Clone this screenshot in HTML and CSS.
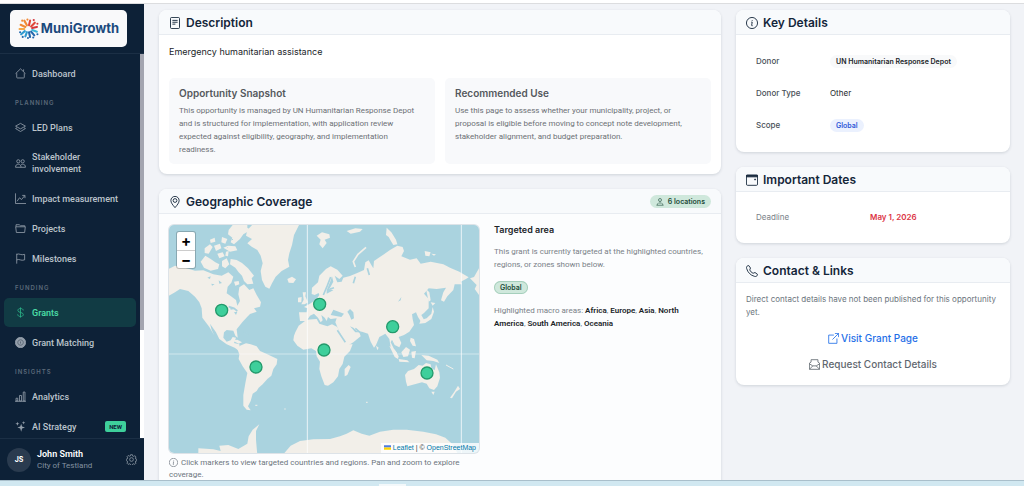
FILE: index.html
```html
<!DOCTYPE html>
<html lang="en">
<head>
<meta charset="utf-8">
<meta name="viewport" content="width=device-width, initial-scale=1">
<title>MuniGrowth – Grant</title>
<link rel="stylesheet" href="styles.css">
</head>
<body>
<svg class="defs" aria-hidden="true">
  <symbol id="i-house" viewBox="0 0 16 16"><path d="M2.5 7.5v6a1 1 0 0 0 1 1h9a1 1 0 0 0 1-1v-6M.8 8.2 8 1.2l7.2 7M12.5 5V2"/></symbol>
  <symbol id="i-layers" viewBox="0 0 16 16"><path d="M8 2 .8 6 8 10l7.2-4zM3 8.2.8 9.5 8 13.8l7.2-4.3L13 8.2"/></symbol>
  <symbol id="i-people" viewBox="0 0 16 16"><circle cx="4.8" cy="4.8" r="2.3"/><circle cx="11.2" cy="4.8" r="2.3"/><path d="M.8 13.5c0-3 1.500-4.500 4-4.500s4 1.500 4 4.500zM8.800 13.500h6.400c0-3-1.500-4.500-4-4.500-1 0-1.800.2-2.500.700"/></symbol>
  <symbol id="i-graph" viewBox="0 0 16 16"><path d="M.7.5v14.800H16M3 12l3.500-5 3 2.500L14 4M10.500 3.500h4v4"/></symbol>
  <symbol id="i-folder" viewBox="0 0 16 16"><path d="M1 5.500h14l-1 8.300H2zM1.500 5.500V2.500h4.700l1.600 1.500h6.500v1.500"/></symbol>
  <symbol id="i-flag" viewBox="0 0 16 16"><path d="M2.500 15.500V1M2.500 2c4-2 6 2 11.500 0v8c-5.500 2-7.500-2-11.500 0"/></symbol>
  <symbol id="i-dollar" viewBox="0 0 16 16"><path d="M8 .5v15M12 5c0-1.800-1.700-2.800-4-2.800S4.200 3.400 4.200 5c0 4 7.900 2 7.900 6 0 1.700-1.700 2.800-4.100 2.800S3.900 12.600 3.900 10.700"/></symbol>
  <symbol id="i-target" viewBox="0 0 16 16"><circle cx="8" cy="8" r="7.500" fill="currentColor"/><path d="M8 4a4 4 0 1 0 .1 0M8 6.500v3" stroke="#53606e"/></symbol>
  <symbol id="i-bars" viewBox="0 0 16 16"><path d="M1.500 10.500h2.500v4H1.500zM6.500 6.500h3v8h-3zM12 1.500h2.500v13H12zM0 15h16"/></symbol>
  <symbol id="i-stars" viewBox="0 0 16 16"><path fill="currentColor" stroke="none" d="M9 4l1.300 4L14.500 9.600 10.300 11 9 15.800 7.600 11 3.500 9.600 7.600 8zM3.500 1l.8 2.200L6.500 4l-2.200.8L3.500 7l-.8-2.200L.5 4l2.200-.8zM12.500 0l.6 1.900 1.900.6-1.900.6-.6 1.900-.6-1.900-1.900-.6 1.900-.6z"/></symbol>
  <symbol id="i-gear" viewBox="0 0 16 16"><circle cx="8" cy="8" r="2.700"/><path d="M6.700 1h2.600l.5 2 1.300.5 1.800-1 1.700 1.700-1 1.800.5 1.300 1.900.5v2l-1.900.5-.6 1.400 1 1.700-1.700 1.700-1.800-1-1.200.5-.5 2H6.700l-.5-2-1.300-.5-1.800 1-1.700-1.700 1-1.800-.5-1.300L.3 9.500v-2L2 7l.5-1.400-1-1.700 1.700-1.700 1.800 1L6.200 3z"/></symbol>
  <symbol id="i-file" viewBox="0 0 16 16"><rect x="2" y=".6" width="12" height="14.800" rx="1.500"/><path d="M4.500 4.500h7M4.500 7h7M4.500 9.500h4"/></symbol>
  <symbol id="i-pin" viewBox="0 0 16 16"><path d="M8 15.500C5 12 2.500 9 2.500 6a5.500 5.500 0 0 1 11 0c0 3-2.500 6-5.500 9.500z"/><circle cx="8" cy="6" r="2.500"/></symbol>
  <symbol id="i-info" viewBox="0 0 16 16"><circle cx="8" cy="8" r="7.400"/><path d="M7 6.800h1.300L7.500 11c0 .8.500 1 1.300.6M8.300 4v1"/></symbol>
  <symbol id="i-cal" viewBox="0 0 16 16"><rect x=".6" y="1.600" width="14.800" height="13.500" rx="1.500"/><path fill="currentColor" d="M.6 1.600h14.800v2.200H.6z"/><path d="M11.500 6.800h1.200v1h-1.200z"/></symbol>
  <symbol id="i-phone" viewBox="0 0 16 16"><path d="M1.500 1.500 3.600.7 6 4 5 6.500c.8 2 2.500 3.700 4.500 4.500l2.500-1 3.300 2.400-.8 2.100c-.5 1-2 1-3 .7C6 13.700 2.300 10 .8 4.500c-.3-1-.2-2.500.7-3z"/></symbol>
  <symbol id="i-ext" viewBox="0 0 16 16"><path d="M8.500 3H1v12h12V8M10 .6h5.400V6M15.400.6 6.500 9.500"/></symbol>
  <symbol id="i-mail" viewBox="0 0 16 16"><path d="M.6 6 3 4.500V1h10v3.500L15.400 6v9H.6zM.6 7l4.900 3h5l4.900-3M.6 15l4.900-5M15.400 15l-4.900-5"/></symbol>
  <symbol id="i-geo" viewBox="0 0 16 16"><circle cx="8" cy="4" r="3"/><path d="M8 7v5M5 9.500 1.500 14.500h13L11 9.500"/></symbol>
</svg>

<div class="topline"></div>
<div class="app">
  <aside class="sidebar">
    <div class="brand">
      <a class="logo" href="#">
        <svg class="logo-mark" viewBox="0 0 40 40" aria-hidden="true">
          <g fill="none" stroke-width="4" stroke-linecap="round">
            <path stroke="#e0483a" d="M21 14 23 5M25 16l7-7"/><path stroke="#d5363c" d="M27 19l9-2"/>
            <path stroke="#f08a35" d="M17 14 12 5M14 17 5 13"/><path stroke="#f4a84a" d="M12 21H3"/>
            <path stroke="#2e9bd0" d="M13 25l-7 6M17 27l-3 8"/><path stroke="#2468ad" d="M21 27l2 9M25 26l6 7"/><path stroke="#39b5d8" d="M27 23l9 3"/>
          </g>
          <g fill="#f08a35"><circle cx="8" cy="5" r="2"/><circle cx="18" cy="3" r="2"/></g><circle cx="30" cy="4" r="2" fill="#d5363c"/><circle cx="37" cy="11" r="2" fill="#d5363c"/>
          <g fill="#2468ad"><circle cx="4" cy="27" r="2"/><circle cx="9" cy="36" r="2"/><circle cx="19" cy="38" r="2"/><circle cx="29" cy="37" r="2"/><circle cx="37" cy="31" r="2"/></g>
        </svg>
        <span class="logo-text">MuniGrowth</span>
      </a>
    </div>
    <nav class="nav">
      <a class="item" href="#"><svg class="ico"><use href="#i-house"/></svg>Dashboard</a>
      <div class="group">Planning</div>
      <a class="item" href="#"><svg class="ico"><use href="#i-layers"/></svg>LED Plans</a>
      <a class="item" href="#"><svg class="ico"><use href="#i-people"/></svg><span class="two-line">Stakeholder involvement</span></a>
      <a class="item" href="#"><svg class="ico"><use href="#i-graph"/></svg>Impact measurement</a>
      <a class="item" href="#"><svg class="ico"><use href="#i-folder"/></svg>Projects</a>
      <a class="item" href="#"><svg class="ico"><use href="#i-flag"/></svg>Milestones</a>
      <div class="group">Funding</div>
      <a class="item active" href="#"><svg class="ico"><use href="#i-dollar"/></svg>Grants</a>
      <a class="item" href="#"><svg class="ico"><use href="#i-target"/></svg>Grant Matching</a>
      <div class="group">Insights</div>
      <a class="item" href="#"><svg class="ico"><use href="#i-bars"/></svg>Analytics</a>
      <a class="item" href="#"><svg class="ico"><use href="#i-stars"/></svg>AI Strategy<span class="new">NEW</span></a>
      <div class="scroll"></div>
    </nav>
    <div class="user">
      <span class="avatar">JS</span>
      <div class="who"><strong>John Smith</strong><span>City of Testland</span></div>
      <button class="gear" type="button" aria-label="Settings"><svg class="ico"><use href="#i-gear"/></svg></button>
    </div>
  </aside>

  <main class="main">
    <div class="col">
      <section class="card">
        <header class="head"><svg class="ico"><use href="#i-file"/></svg><h2>Description</h2></header>
        <div class="body">
          <p class="lead">Emergency humanitarian assistance</p>
          <div class="tiles">
            <div class="tile"><h3>Opportunity Snapshot</h3><p>This opportunity is managed by UN Humanitarian Response Depot and is structured for implementation, with application review expected against eligibility, geography, and implementation readiness.</p></div>
            <div class="tile"><h3>Recommended Use</h3><p>Use this page to assess whether your municipality, project, or proposal is eligible before moving to concept note development, stakeholder alignment, and budget preparation.</p></div>
          </div>
        </div>
      </section>

      <section class="card geo">
        <header class="head"><svg class="ico"><use href="#i-pin"/></svg><h2>Geographic Coverage</h2><span class="pill count"><svg class="ico"><use href="#i-geo"/></svg>6 locations</span></header>
        <div class="body geo-grid">
          <div class="map-col">
            <div class="map">
              <svg class="world" viewBox="27 30 930 684" preserveAspectRatio="xMidYMid slice" role="img" aria-label="World map">
                <filter id="coast" x="0" y="0" width="1" height="1"><feTurbulence type="fractalNoise" baseFrequency=".2" numOctaves="2" seed="4"/><feDisplacementMap in="SourceGraphic" scale="4"/></filter>
                <rect x="27" y="30" width="930" height="684" fill="#aad3df"/>
                <g filter="url(#coast)">
                <g fill="#f2efe9">
                  <path d="M20 165 45 152 75 158 105 167 130 166 160 178 185 182 205 172 220 185 214 203 203 215 200 235 215 245 228 255 232 272 240 258 235 238 238 217 252 208 268 225 280 220 290 240 303 262 300 275 282 280 290 290 270 297 262 305 248 320 236 335 230 343 233 368 226 362 220 347 200 345 192 352 190 368 200 380 212 376 218 366 228 368 222 384 238 388 240 401 250 404 238 408 224 398 200 388 178 372 168 352 150 326 155 345 162 360 148 336 127 308 125 280 118 262 105 245 85 228 60 222 45 232 20 246z"/>
                  <path d="M262 45 282 24H420L402 60 396 90 388 115 384 135 388 155 365 168 347 185 336 205 328 221 316 215 306 195 302 168 308 145 302 122 292 105 275 95 262 85 276 72 258 62z"/>
                  <path d="M206 45 222 25H262L262 38 272 45 250 58 240 72 222 88 212 82 217 68 204 58zM212 132 230 135 246 144 264 160 282 182 275 190 280 206 262 208 252 198 246 182 236 172 226 158 210 148zM122 140 136 122 152 132 166 142 178 148 174 162 152 167 132 158zM134 100 150 88 158 96 146 116 134 114zM162 92 180 86 184 100 168 108zM186 66 202 72 196 86 184 82zM172 116 188 112 194 124 178 130zM186 138 200 130 208 148 196 160 186 154zM190 98 204 92 226 94 232 106 210 110zM150 74 164 68 166 80 152 84zM222 200 236 198 238 208 226 212zM198 110 206 108 204 124 196 122z"/>
                  <path d="M382 192 396 185 408 193 400 204 386 203zM428 232 438 232 436 244 444 262 434 268 424 268 431 254zM414 248 425 246 424 262 414 262z"/>
                  <path d="M470 62 486 52 508 58 510 68 494 74 500 84 488 100 478 88 482 74z"/>
                  <path d="M455 237 456 218 474 202 478 182 498 162 512 154 532 164 548 182 538 192 524 182 532 202 545 200 550 188 570 183 590 175 612 165 616 142 626 136 634 150 640 160 642 138 654 130 672 118 690 105 712 92 728 96 732 108 724 124 750 134 770 130 782 146 812 140 850 148 870 158 898 170 926 187 918 192 902 200 906 208 884 208 880 225 862 244 852 260 843 256 850 232 858 218 830 222 806 220 792 236 806 252 806 280 792 294 784 300 792 314 784 322 774 306 768 292 756 298 758 312 762 330 748 350 732 360 716 366 724 384 718 397 704 390 696 374 692 382 702 402 712 415 706 416 692 396 688 372 676 356 658 366 648 390 642 398 632 380 624 356 606 350 590 348 580 338 570 334 586 352 598 352 602 364 580 382 560 394 556 388 544 362 532 336 526 322 530 310 512 312 504 306 500 318 494 308 484 300 488 316 482 322 474 308 462 296 450 302 440 318 420 318 417 292 440 292 442 280 432 276 452 265 470 252 478 240 476 234 464 240z"/>
                  <path d="M406 352 416 332 440 314 470 312 478 326 502 334 516 328 532 336 546 364 560 388 578 388 570 408 553 425 548 447 538 462 534 484 520 502 504 512 494 510 484 484 478 462 480 440 470 424 468 408 454 400 430 404 412 392 400 376 402 362z"/>
                  <path d="M554 462 566 450 572 456 562 480 554 484zM232 402 240 392 258 385 272 388 290 394 300 408 322 418 352 432 350 448 340 462 334 482 322 492 308 508 296 518 290 528 278 536 272 558 264 574 272 586 260 584 250 572 250 540 256 505 262 474 248 454 236 432 238 418zM216 376 232 374 246 382 236 386z"/>
                  <path d="M735 480 744 468 762 462 776 450 788 452 798 444 812 448 814 460 824 466 828 448 838 472 840 488 832 514 822 525 808 520 800 506 786 502 764 508 742 514 738 500zM814 530 824 530 820 540zM894 512 900 522 888 530 876 550 870 548 882 532zM688 392 704 404 716 424 714 432 704 426zM716 432 742 436 748 442 718 440zM724 412 738 396 750 404 744 424 730 426zM754 410 768 408 764 430 756 428zM784 420 806 422 832 434 838 444 820 438 800 436zM752 368 762 372 768 394 758 392 750 378zM648 392 656 398 652 406zM812 262 826 264 818 272zM818 276 814 296 800 310 782 316 778 326 796 324 814 312 822 290zM798 222 808 232 812 256 806 260zM930 190 942 186 957 160V240L944 222 950 210z"/>
                  <path d="M680 38 694 52 708 74 712 88 700 90 694 80 686 66 678 60zM560 48 586 40 608 42 600 50 572 56zM794 108 812 112 808 124 796 122zM814 116 828 118 822 122z"/>
                  <path d="M115 700 160 703 182 708 178 692 205 690 235 702 262 686 266 664 278 644 298 628 288 648 288 675 292 720H115zM368 720 392 692 420 678 460 673 510 672 540 664 560 656 580 646 605 656 628 662 660 650 700 644 740 644 790 650 828 658 856 668 880 690 895 720z"/>
                </g>
                <path d="M618 97 594 118 580 140 586 156" fill="none" stroke="#f2efe9" stroke-width="5"/>
                <path d="M512 186 502 212 490 240M510 222 522 218M532 346 556 382M586 340 600 352M250 350 272 364M206 275 222 280 232 288M586 185 580 205M622 160 628 180" fill="none" stroke="#aad3df" stroke-width="5"/>
                <path d="M500 226 510 202 516 184 520 200 508 222 520 226 500 236zM512 300 520 284 536 290 552 296 544 306zM562 290 570 282 580 292 582 310 574 314 568 300zM210 276 224 282 212 284zM222 292 232 290 228 300zM142 188 152 184 150 192zM154 206 164 208 156 212zM714 260 724 246 722 256zM176 196 186 204 178 206z" fill="#aad3df"/>
                <path d="M286 571h6M373 582h4M618 562h5M858 450 880 462" stroke="#f2efe9" stroke-width="3"/>
                </g>
                <path d="M442 30v684M904 30v684" fill="none" stroke="#fff" stroke-opacity=".75" stroke-width="3"/>
                <path d="M27 417h930" fill="none" stroke="#fff" stroke-opacity=".45" stroke-width="3"/>
                <g fill="#3ecf9b" stroke="#249a6c" stroke-width="4"><circle cx="185" cy="286" r="18"/><circle cx="479" cy="268" r="18"/><circle cx="698" cy="335" r="18"/><circle cx="492" cy="405" r="18"/><circle cx="288" cy="456" r="18"/><circle cx="801" cy="474" r="18"/></g>
              </svg>
              <div class="zoom"><button type="button" aria-label="Zoom in">+</button><button type="button" aria-label="Zoom out">−</button></div>
              <div class="credit"><svg class="ua" viewBox="0 0 12 8"><path fill="#4c7be1" d="M0 0h12v4H0z"/><path fill="#ffd500" d="M0 4h12v4H0z"/></svg><a href="#">Leaflet</a> | © <a href="#">OpenStreetMap</a></div>
            </div>
            <p class="hint"><svg class="ico"><use href="#i-info"/></svg>Click markers to view targeted countries and regions. Pan and zoom to explore coverage.</p>
          </div>
          <div class="area">
            <h3>Targeted area</h3>
            <p>This grant is currently targeted at the highlighted countries, regions, or zones shown below.</p>
            <span class="pill zone">Global</span>
            <p>Highlighted macro areas: <b>Africa</b>, <b>Europe</b>, <b>Asia</b>, <b>North America</b>, <b>South America</b>, <b>Oceania</b></p>
          </div>
        </div>
      </section>
    </div>

    <div class="col">
      <section class="card">
        <header class="head"><svg class="ico"><use href="#i-info"/></svg><h2>Key Details</h2></header>
        <dl class="facts">
          <dt>Donor</dt><dd><span class="pill donor">UN Humanitarian Response Depot</span></dd>
          <dt>Donor Type</dt><dd>Other</dd>
          <dt>Scope</dt><dd><span class="pill scope">Global</span></dd>
        </dl>
      </section>
      <section class="card">
        <header class="head"><svg class="ico"><use href="#i-cal"/></svg><h2>Important Dates</h2></header>
        <dl class="facts dates"><dt>Deadline</dt><dd>May 1, 2026</dd></dl>
      </section>
      <section class="card">
        <header class="head"><svg class="ico"><use href="#i-phone"/></svg><h2>Contact &amp; Links</h2></header>
        <div class="body contact">
          <p>Direct contact details have not been published for this opportunity yet.</p>
          <a class="visit" href="#"><svg class="ico"><use href="#i-ext"/></svg>Visit Grant Page</a>
          <a class="request" href="#"><svg class="ico"><use href="#i-mail"/></svg>Request Contact Details</a>
        </div>
      </section>
    </div>
  </main>
</div>
<footer class="strip"><span></span></footer>
</body>
</html>
```
FILE: styles.css
```css
* { box-sizing: border-box; }
body {
  margin: 0;
  height: 100vh;
  display: flex;
  flex-direction: column;
  overflow: hidden;
  background: #f1f3f7;
  color: #212529;
  font: 9px/13px Inter, "Liberation Sans", sans-serif;
}
h2, h3, p, dl, dd { margin: 0; }
a { color: inherit; text-decoration: none; }
button { font: inherit; padding: 0; border: 0; background: none; color: inherit; }
.defs { position: absolute; width: 0; height: 0; }
.ico { width: 11px; height: 11px; flex: none; fill: none; stroke: currentColor; stroke-width: 1.2; }
.topline { flex: none; height: 4px; background: #fff; border-bottom: 1px solid #dcdddf; }
.strip { flex: none; height: 6px; background: #d1e8f1; border-top: 1px solid #a9bfcb; display: flex; align-items: flex-end; padding-left: 37%; }
.strip span { width: 27px; height: 2px; background: #f3f8fa; }
.app { flex: 1; min-height: 0; display: flex; }

.sidebar { width: 144px; flex: none; display: flex; flex-direction: column; background: #0d2137; color: #bcc4cc; }
.brand { height: 50px; flex: none; padding: 6px 17px 6px 10px; border-bottom: 1px solid #1b2f45; }
.logo { height: 37px; display: flex; align-items: center; justify-content: center; gap: 2px; border-radius: 5px; background: #f9f9fa; }
.logo-mark { width: 21px; height: 21px; }
.logo-text { font-size: 13px; font-weight: 700; color: #1b4a7d; }
.nav { flex: 1; min-height: 0; position: relative; display: flex; flex-direction: column; gap: 1px; padding: 5px 8px 0 4px; overflow: hidden; }
.item { flex: none; min-height: 29px; display: flex; align-items: center; gap: 6px; padding: 0 10px 0 11px; border-radius: 5px; font-family: Roboto, "Liberation Sans", sans-serif; line-height: 12px; font-weight: 500; }
.item .ico { stroke: #939eaa; color: #939eaa; }
.item:has(.two-line) { padding-block: 8px; }
.two-line { width: 64px; }
.item.active { background: #113b44; color: #4ad9a5; font-weight: 600; }
.item.active .ico { stroke: #2bb488; }
.group { flex: none; height: 23px; padding: 9px 0 0 11px; font-size: 6px; line-height: 10px; font-weight: 600; letter-spacing: 1px; text-transform: uppercase; color: #5b6a7a; }
.new { margin-left: auto; padding: 0 4px; border-radius: 2px; background: #3ecf9b; color: #0d2137; font-size: 6px; line-height: 11px; font-weight: 700; }
.scroll { position: absolute; top: 0; right: 0; bottom: 0; width: 4px; background: linear-gradient(#a3a5b0 72%, #fff 72%); }
.user { flex: none; height: 42px; display: flex; align-items: center; gap: 6px; padding: 0 7px; border-top: 1px solid #1b2f45; }
.avatar { width: 24px; height: 24px; border-radius: 50%; background: #2a3b4f; color: #fff; font-size: 7px; line-height: 24px; font-weight: 700; text-align: center; }
.who { flex: 1; line-height: 11px; font-family: Roboto, "Liberation Sans", sans-serif; }
.who strong, .who span { display: block; }
.who strong { color: #fff; font-weight: 600; }
.who span { font-size: 8px; color: #8391a0; }
.gear { display: flex; color: #8a96a3; }

.main { flex: 1; min-width: 0; display: grid; grid-template-columns: 562fr 274fr; align-items: start; gap: 15px; padding: 6px 14px 0 15px; overflow: hidden; }
.col { display: grid; gap: 15px; min-width: 0; }
.card { border-radius: 8px; background: #fff; box-shadow: 0 1px 3px #0d213726; overflow: hidden; }
.head { display: flex; align-items: center; gap: 5px; height: 25px; padding: 1px 10px 0; background: #f8fafc; border-bottom: 1px solid #e8ecf1; color: #14263a; }
.head > .ico { width: 12px; height: 12px; }
.head h2 { font-size: 12px; line-height: 16px; font-weight: 600; }
.body { padding: 10px; }
.lead { padding-bottom: 20px; }
.tiles { display: grid; grid-template-columns: 1fr 1fr; gap: 10px; }
.tile { padding: 9px 10px 8px; border-radius: 5px; background: #f8f9fb; color: #6c7075; font-size: 8px; }
.tile h3 { font-size: 10px; line-height: 13px; font-weight: 600; color: #54585d; margin-bottom: 4px; }
.tile p, .area p, .hint { font-family: Roboto, "Liberation Sans", sans-serif; }
.pill { display: inline-flex; align-items: center; gap: 4px; height: 13px; padding: 0 6px; border-radius: 7px; font-size: 7px; font-weight: 600; line-height: 13px; }
.count { margin-left: auto; background: #cfe8dc; color: #1d4b39; }
.count .ico { width: 8px; height: 8px; }
.geo { background: #fcfdfe; }
.geo-grid { display: grid; grid-template-columns: 310fr 217fr; gap: 15px; }
.map-col { padding-top: 1px; }
.map { position: relative; aspect-ratio: 310 / 228; border-radius: 5px; overflow: hidden; box-shadow: 0 0 0 1px #dde3e8; }
.world { display: block; width: 100%; height: 100%; }
.zoom { position: absolute; top: 7px; left: 8px; display: grid; width: 18px; border-radius: 2px; background: #fff; box-shadow: 0 0 0 1px #0003; }
.zoom button { height: 18px; font-size: 15px; line-height: 18px; font-weight: 700; color: #000; }
.zoom button + button { border-top: 1px solid #ccc; }
.credit { position: absolute; right: 0; bottom: 0; padding: 0 3px; background: #fffc; font: 7px/10px "Liberation Sans", sans-serif; color: #333; }
.credit a { color: #0078a8; }
.ua { width: 7px; height: 5px; margin-right: 2px; }
.hint { padding-top: 4px; font-size: 8px; line-height: 12px; color: #6c757d; }
.hint .ico { width: 9px; height: 9px; margin-right: 3px; vertical-align: -2px; }
.area { color: #7a8188; font-size: 8px; }
.area h3 { font-size: 9px; line-height: 12px; font-weight: 600; color: #212529; margin-bottom: 9px; }
.area b { font-weight: 600; color: #212529; }
.zone { margin: 10px 0; background: #cfe8dc; color: #1d4b39; box-shadow: inset 0 0 0 1px #a5cfbc; }

.facts { display: grid; grid-template-columns: 74fr 160fr; row-gap: 19px; padding: 20px; font-size: 8px; }
.facts dt { color: #495057; font-weight: 500; }
.donor { background: #f8f9fa; color: #212529; }
.scope { background: #ebf1fe; color: #2f58d8; }
.dates { grid-template-columns: 114fr 120fr; padding-block: 19px; }
.dates dt { color: #7a8188; font-weight: 400; }
.dates dd { color: #dc3545; font-weight: 600; }
.contact { display: grid; justify-items: center; gap: 13px; padding-bottom: 14px; }
.contact p { justify-self: stretch; font-size: 8px; color: #6c757d; }
.contact a { display: flex; align-items: center; gap: 2px; font-size: 10px; line-height: 13px; font-weight: 500; }
.visit { color: #1f6fe8; }
.request { color: #5f676f; }
```
